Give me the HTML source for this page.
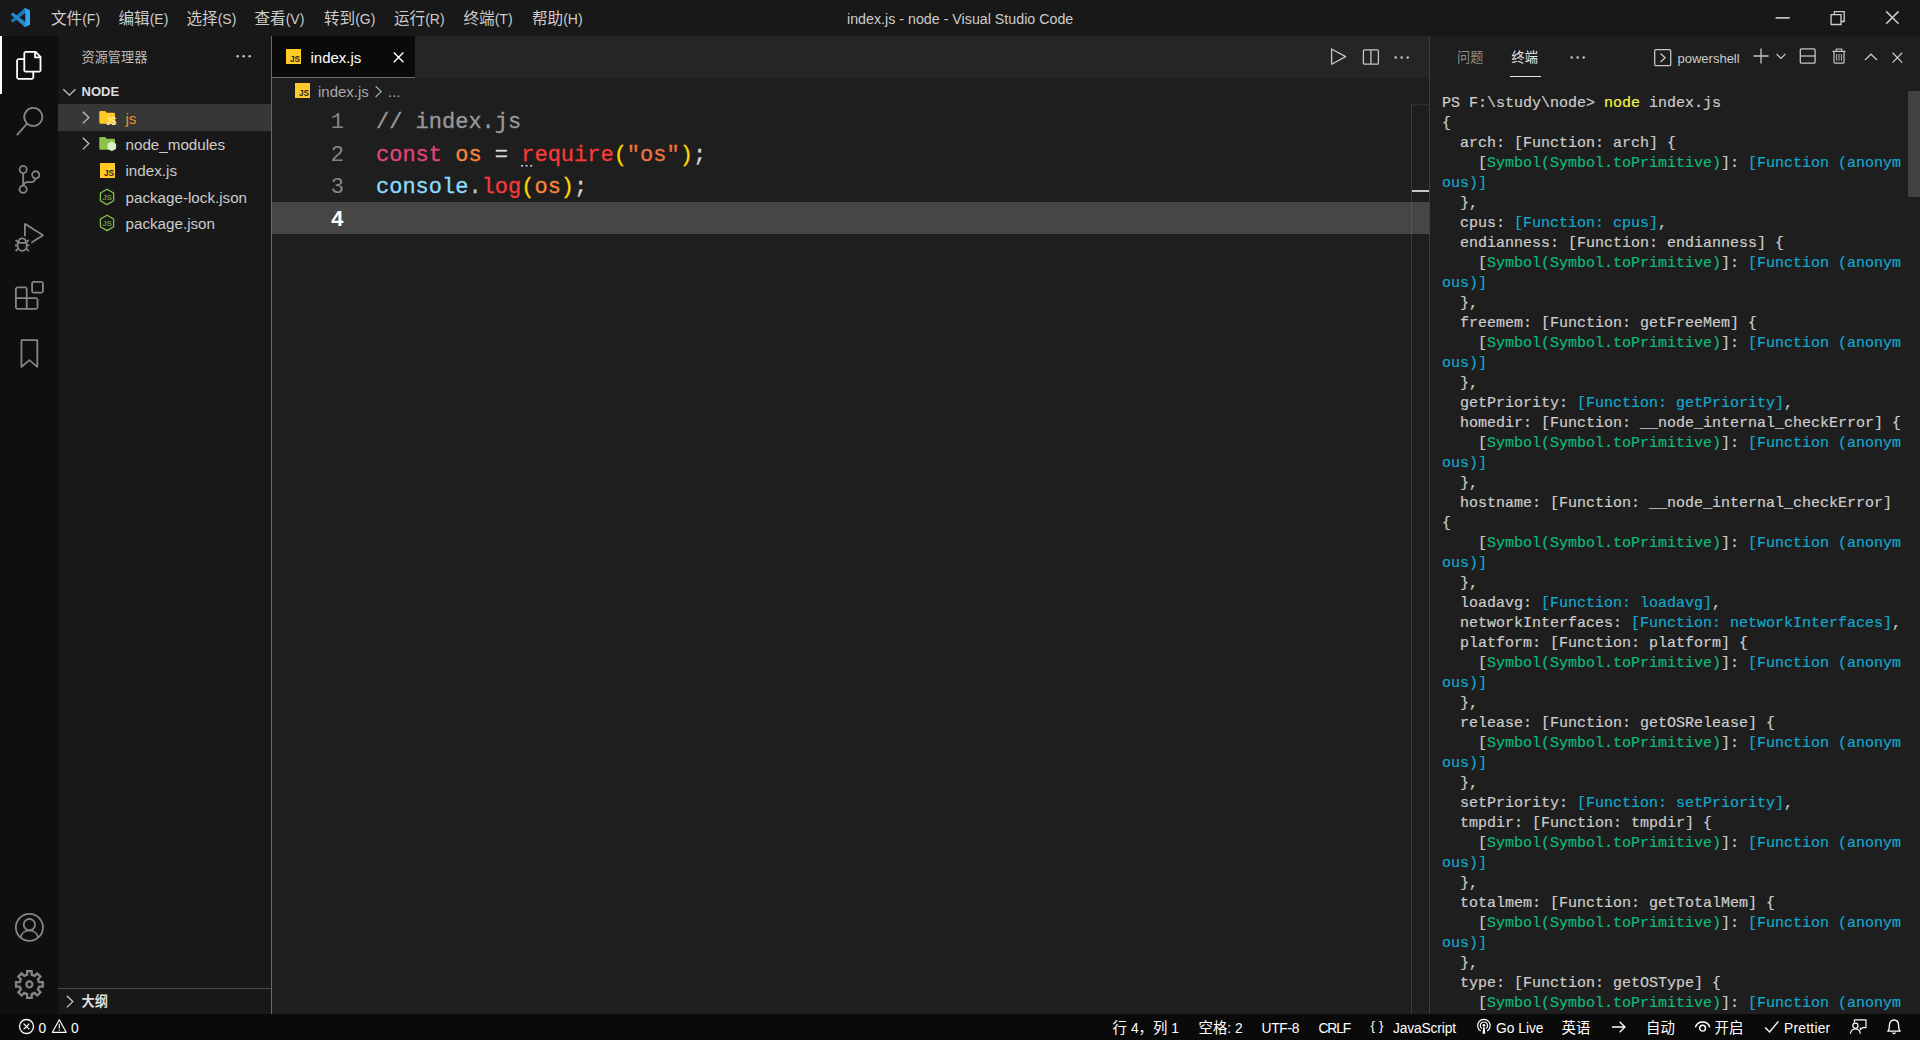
<!DOCTYPE html>
<html lang="zh-CN">
<head>
<meta charset="utf-8">
<title>index.js - node - Visual Studio Code</title>
<style>
*{box-sizing:border-box;margin:0;padding:0}
html,body{width:1920px;height:1040px;overflow:hidden;background:#1e1e1e}
body{position:relative;font-family:"Liberation Sans","Noto Sans CJK SC",sans-serif;font-size:15.6px;color:#ccc;-webkit-font-smoothing:antialiased}
.abs{position:absolute}
svg{display:block;position:absolute;overflow:visible}
.t{position:absolute;white-space:pre;line-height:1}
/* regions */
#titlebar{left:0;top:0;width:1920px;height:36px;background:#181818}
#activity{left:0;top:36px;width:58px;height:978px;background:#0f0f0f}
#sidebar{left:58px;top:36px;width:213px;height:978px;background:#181818}
#sideborder{left:271px;top:36px;width:1px;height:978px;background:#696969}
#tabs{left:272px;top:36px;width:1157px;height:42px;background:#252526}
#tab{left:272px;top:36px;width:143px;height:42px;background:#0a0a0a}
#editor{left:272px;top:78px;width:1157px;height:936px;background:#1e1e1e}
#panelborder{left:1429px;top:36px;width:1px;height:978px;background:#3e3e3e}
#panel{left:1430px;top:36px;width:490px;height:978px;background:#1e1e1e}
#status{left:0;top:1014px;width:1920px;height:26px;background:#0a0a0a}
.menu{top:11px;font-size:15.6px;color:#ccc}
.menu .lat{font-size:14px}

.row{position:absolute;left:58px;width:213px;height:26.4px}
.rt{position:absolute;left:125.5px;font-size:15.2px;color:#ccc;white-space:pre;line-height:1}

.code{-webkit-text-stroke:0.3px;position:absolute;left:376px;font-family:"Liberation Mono",monospace;font-size:22px;white-space:pre;line-height:32.4px;height:32.4px;color:#d4d4d4}
.ln{position:absolute;left:272px;width:72px;text-align:right;font-family:"Liberation Mono",monospace;font-size:22px;line-height:32.4px;height:32.4px;color:#858585}

.term{-webkit-text-stroke:0.2px;position:absolute;left:1442px;font-family:"Liberation Mono",monospace;font-size:15px;line-height:20px;height:20px;white-space:pre;color:#ccc}
.g{color:#0dbc79}.c{color:#11a8cd}.y{color:#f5f543}

.st{position:absolute;top:1021px;font-size:14.4px;line-height:1;color:#fff;white-space:pre}
.st .l{font-size:13.8px}
</style>
</head>
<body>
<div id="titlebar" class="abs"></div>
<div id="activity" class="abs"></div>
<div id="sidebar" class="abs"></div>
<div id="sideborder" class="abs"></div>
<div id="tabs" class="abs"></div>
<div id="tab" class="abs"></div>
<div id="editor" class="abs"></div>
<div id="panelborder" class="abs"></div>
<div id="panel" class="abs"></div>
<div id="status" class="abs"></div>

<!-- TITLEBAR -->
<svg style="left:11px;top:8px" width="19" height="19" viewBox="0 0 100 100">
<path fill="#1878b8" d="M96.4614 10.7962L75.8569 0.875542C73.4719 -0.272773 70.6217 0.211611 68.75 2.08333L1.29858 63.5832C-0.515693 65.2373 -0.513607 68.0937 1.30308 69.7452L6.81272 74.754C8.29793 76.1042 10.5347 76.2036 12.1338 74.9905L93.3609 13.3699C96.086 11.3026 100 13.2462 100 16.6667V16.4275C100 14.0265 98.6246 11.8378 96.4614 10.7962Z"/>
<path fill="#2088cf" d="M96.4614 89.2038L75.8569 99.1245C73.4719 100.273 70.6217 99.7884 68.75 97.9167L1.29858 36.4169C-0.515693 34.7627 -0.513607 31.9063 1.30308 30.2548L6.81272 25.246C8.29793 23.8958 10.5347 23.7964 12.1338 25.0095L93.3609 86.6301C96.086 88.6974 100 86.7538 100 83.3334V83.5726C100 85.9735 98.6246 88.1622 96.4614 89.2038Z"/>
<path fill="#33a3ee" d="M75.8578 99.1263C73.4721 100.274 70.6219 99.7885 68.75 97.9166C71.0564 100.223 75 98.5895 75 95.3278V4.67213C75 1.41039 71.0564 -0.223106 68.75 2.08329C70.6219 0.211402 73.4721 -0.273666 75.8578 0.873633L96.4587 10.7807C98.6234 11.8217 100 14.0112 100 16.4132V83.5871C100 85.9891 98.6234 88.1786 96.4586 89.2196L75.8578 99.1263Z"/>
</svg>
<div class="t menu" style="left:51px">文件<span class="lat">(F)</span></div>
<div class="t menu" style="left:118.5px">编辑<span class="lat">(E)</span></div>
<div class="t menu" style="left:186.5px">选择<span class="lat">(S)</span></div>
<div class="t menu" style="left:254.5px">查看<span class="lat">(V)</span></div>
<div class="t menu" style="left:324px">转到<span class="lat">(G)</span></div>
<div class="t menu" style="left:394px">运行<span class="lat">(R)</span></div>
<div class="t menu" style="left:463.5px">终端<span class="lat">(T)</span></div>
<div class="t menu" style="left:532px">帮助<span class="lat">(H)</span></div>
<div class="t" id="wintitle" style="left:847px;top:12px;font-size:14.25px;color:#ccc">index.js - node - Visual Studio Code</div>
<svg style="left:1770px;top:8px" width="140" height="22" viewBox="0 0 140 22" fill="none" stroke="#ccc" stroke-width="1.3">
<path stroke-width="1.6" d="M5.6 9.9H19.7"/>
<path d="M61.1 6.6H71V16.5H61.1z"/><path d="M64.3 6.6V3.6H74.2V13.5H71"/>
<path stroke-width="1.5" d="M116.2 3.4L128.6 15.8M128.6 3.4L116.2 15.8"/>
</svg>
<!-- ACTIVITY -->
<div class="abs" style="left:0;top:36px;width:2px;height:58px;background:#fff"></div>
<svg style="left:14.9px;top:50.5px" width="28.8" height="28.8" viewBox="0 0 24 24" fill="#fff"><path d="M17.5 0h-9L7 1.5V6H2.5L1 7.5v15.07L2.5 24h12.07L16 22.57V18h4.7l1.3-1.43V4.5L17.5 0zm0 2.12l2.38 2.38H17.5V2.12zm-3 20.38h-12v-15H7v9.07L8.5 18h6v4.5zm6-6h-12v-15H16V6h4.5v10.5z"/></svg>
<svg style="left:14.9px;top:106.5px" width="28.8" height="28.8" viewBox="0 0 24 24" fill="#858585"><path d="M15.25 0a8.25 8.25 0 0 0-6.18 13.72L1 22.88l1.12 1 8.05-9.12A8.251 8.251 0 1 0 15.25.01V0zm0 15a6.75 6.75 0 1 1 0-13.5 6.75 6.75 0 0 1 0 13.5z"/></svg>
<svg style="left:14.9px;top:164.5px" width="28.8" height="28.8" viewBox="0 0 24 24" fill="#858585"><path d="M21.007 8.222A3.738 3.738 0 0 0 15.045 5.2a3.737 3.737 0 0 0 1.156 6.583 2.988 2.988 0 0 1-2.668 1.67h-2.99a4.456 4.456 0 0 0-2.989 1.165V7.4a3.737 3.737 0 1 0-1.494 0v9.117a3.776 3.776 0 1 0 1.816.099 2.99 2.99 0 0 1 2.668-1.667h2.99a4.484 4.484 0 0 0 4.223-3.039 3.736 3.736 0 0 0 3.25-3.687zM4.565 3.738a2.242 2.242 0 1 1 4.484 0 2.242 2.242 0 0 1-4.484 0zm4.484 16.441a2.242 2.242 0 1 1-4.484 0 2.242 2.242 0 0 1 4.484 0zm8.221-9.715a2.242 2.242 0 1 1 0-4.485 2.242 2.242 0 0 1 0 4.485z"/></svg>
<svg style="left:14.9px;top:222.5px" width="28.8" height="28.8" viewBox="0 0 24 24" fill="#858585"><path d="M10.94 13.5l-1.32 1.32a3.73 3.73 0 0 0-7.24 0L1.06 13.5 0 14.56l1.72 1.72-.22.22V18H0v1.5h1.5v.08c.077.489.214.966.41 1.42L0 22.94 1.06 24l1.65-1.65A4.308 4.308 0 0 0 6 24a4.31 4.31 0 0 0 3.29-1.65L10.94 24 12 22.94 10.09 21c.198-.464.336-.951.41-1.45v-.1H12V18h-1.5v-1.5l-.22-.22L12 14.56l-1.06-1.06zM6 13.5a2.25 2.25 0 0 1 2.25 2.25h-4.5A2.25 2.25 0 0 1 6 13.5zm3 6a3.33 3.33 0 0 1-3 3 3.33 3.33 0 0 1-3-3v-2.25h6v2.25zm14.76-9.9v1.26L13.5 17.37V15.6l8.5-5.37L9 2v9.46a5.07 5.07 0 0 0-1.5-.72V.63L8.64 0l15.12 9.6z"/></svg>
<svg style="left:14.9px;top:280.5px" width="28.8" height="28.8" viewBox="0 0 24 24" fill="#858585"><path d="M13.5 1.5L15 0h7.5L24 1.5V9l-1.5 1.5H15L13.5 9V1.5zm1.5 0V9h7.5V1.5H15zM0 15V6l1.5-1.5H9L10.5 6v7.5H18l1.5 1.5v7.5L18 24H1.5L0 22.5V15zm9-1.5V6H1.5v7.5H9zM9 15H1.5v7.5H9V15zm1.5 7.5H18V15h-7.5v7.5z"/></svg>
<svg style="left:14.9px;top:338.5px" width="28.8" height="28.8" viewBox="0 0 24 24" fill="none" stroke="#858585" stroke-width="1.5" stroke-linejoin="round"><path d="M5.4 1h13.2v22.2l-6.6-5.6-6.6 5.6z"/></svg>
<svg style="left:14.9px;top:912.7px" width="28.8" height="28.8" viewBox="0 0 24 24" fill="none" stroke="#858585" stroke-width="1.5"><circle cx="12" cy="12" r="11.3"/><circle cx="12" cy="9.7" r="4.7"/><path d="M4.6 20.4a7.6 7.6 0 0 1 14.8 0"/></svg>
<svg style="left:14.9px;top:970.1px" width="28.8" height="28.8" viewBox="0 0 24 24" fill="none" stroke="#858585" stroke-width="1.9" stroke-linejoin="miter"><path d="M10.06 3.93L10.12 0.86L13.88 0.86L13.94 3.93L16.34 4.92L18.55 2.79L21.21 5.45L19.08 7.66L20.07 10.06L23.14 10.12L23.14 13.88L20.07 13.94L19.08 16.34L21.21 18.55L18.55 21.21L16.34 19.08L13.94 20.07L13.88 23.14L10.12 23.14L10.06 20.07L7.66 19.08L5.45 21.21L2.79 18.55L4.92 16.34L3.93 13.94L0.86 13.88L0.86 10.12L3.93 10.06L4.92 7.66L2.79 5.45L5.45 2.79L7.66 4.92Z"/><circle cx="12" cy="12" r="2.5"/></svg>
<!-- SIDEBAR -->
<div class="t" style="left:81.5px;top:50.5px;font-size:13.2px;color:#bbb">资源管理器</div>
<svg style="left:235px;top:53.8px" width="18" height="5" viewBox="0 0 18 5" fill="#c5c5c5"><circle cx="2.7" cy="2.3" r="1.25"/><circle cx="8.7" cy="2.3" r="1.25"/><circle cx="14.7" cy="2.3" r="1.25"/></svg>
<svg style="left:62px;top:86px" width="14" height="12" viewBox="0 0 14 12" fill="none" stroke="#c5c5c5" stroke-width="1.3"><path d="M1.3 3.3L7.4 9.2L13.5 3.3"/></svg>
<div class="t" style="left:81.5px;top:84.6px;font-size:13px;font-weight:bold;color:#ddd">NODE</div>
<div class="row" style="top:104.4px;background:#373737"></div>
<svg style="left:81px;top:110px" width="10" height="15" viewBox="0 0 10 15" fill="none" stroke="#c5c5c5" stroke-width="1.3"><path d="M1.8 1.8L7.8 7.6L1.8 13.4"/></svg>
<svg style="left:81px;top:136.4px" width="10" height="15" viewBox="0 0 10 15" fill="none" stroke="#c5c5c5" stroke-width="1.3"><path d="M1.8 1.8L7.8 7.6L1.8 13.4"/></svg>
<!-- folder js -->
<svg style="left:99px;top:110px" width="19" height="16" viewBox="0 0 19 16"><path fill="#ffca28" d="M0.3 2.2a1.2 1.2 0 0 1 1.2-1.2h4.6l1.7 1.7h7a1.2 1.2 0 0 1 1.2 1.2v8.6a1.2 1.2 0 0 1-1.2 1.2H1.5a1.2 1.2 0 0 1-1.2-1.2z"/><text x="7.2" y="11.3" transform="scale(1,1.3)" font-family="Liberation Sans,sans-serif" font-weight="bold" font-size="8.4" fill="#ffecb3">JS</text></svg>
<div class="rt" style="top:110.5px;color:#f0902a">js</div>
<!-- folder node_modules -->
<svg style="left:99px;top:136.4px" width="19" height="16" viewBox="0 0 19 16"><path fill="#8bc34a" d="M0.3 2.2a1.2 1.2 0 0 1 1.2-1.2h4.6l1.7 1.7h7a1.2 1.2 0 0 1 1.2 1.2v8.6a1.2 1.2 0 0 1-1.2 1.2H1.5a1.2 1.2 0 0 1-1.2-1.2z"/><path fill="#dcedc8" d="M12.8 5.3l4.3 2.5v5l-4.3 2.5l-4.3-2.5v-5z"/></svg>
<div class="rt" style="top:136.9px">node_modules</div>
<!-- index.js -->
<svg style="left:100px;top:163px" width="15" height="15" viewBox="0 0 15 15"><rect width="15" height="15" fill="#ffca28"/><text x="3.9" y="13.4" font-family="Liberation Sans,sans-serif" font-weight="bold" font-size="8.2" fill="#1f1f1f">JS</text></svg>
<div class="rt" style="top:163.3px">index.js</div>
<!-- package-lock.json -->
<svg class="nodeic" style="left:99.2px;top:187.6px" width="16" height="18" viewBox="0 0 16 18"><path fill="none" stroke="#8bc34a" stroke-width="1.3" stroke-linejoin="round" d="M8 1.2l6.6 3.8v7.8L8 16.6 1.4 12.8V5z"/><text x="3.4" y="11.8" font-family="Liberation Sans,sans-serif" font-size="8" fill="#8bc34a">JS</text></svg>
<div class="rt" style="top:189.7px">package-lock.json</div>
<svg class="nodeic" style="left:99.2px;top:214px" width="16" height="18" viewBox="0 0 16 18"><path fill="none" stroke="#8bc34a" stroke-width="1.3" stroke-linejoin="round" d="M8 1.2l6.6 3.8v7.8L8 16.6 1.4 12.8V5z"/><text x="3.4" y="11.8" font-family="Liberation Sans,sans-serif" font-size="8" fill="#8bc34a">JS</text></svg>
<div class="rt" style="top:216.1px">package.json</div>
<!-- outline -->
<div class="abs" style="left:58px;top:988px;width:213px;height:1px;background:#464646"></div>
<svg style="left:64px;top:994px" width="10" height="15" viewBox="0 0 10 15" fill="none" stroke="#c5c5c5" stroke-width="1.3"><path d="M2.8 1.8L8.8 7.6L2.8 13.4"/></svg>
<div class="t" style="left:81.5px;top:995px;font-size:13.2px;font-weight:bold;color:#ddd">大纲</div>
<!-- EDITOR -->
<div class="abs" style="left:272px;top:77px;width:143px;height:1px;background:#6e6e6e"></div>
<svg style="left:286px;top:49px" width="15" height="15" viewBox="0 0 15 15"><rect width="15" height="15" fill="#ffca28"/><text x="3.9" y="13.4" font-family="Liberation Sans,sans-serif" font-weight="bold" font-size="8.2" fill="#1f1f1f">JS</text></svg>
<div class="t" style="left:310.5px;top:49.5px;font-size:15px;color:#fff">index.js</div>
<svg style="left:392px;top:51px" width="13" height="13" viewBox="0 0 13 13" fill="none" stroke="#fff" stroke-width="1.4"><path d="M1.8 1.6L11.4 11.2M11.4 1.6L1.8 11.2"/></svg>
<!-- editor actions -->
<svg style="left:1329px;top:47px" width="20" height="20" viewBox="0 0 20 20" fill="none" stroke="#c5c5c5" stroke-width="1.3" stroke-linejoin="round"><path d="M2.6 2L16.6 9.6L2.6 17.3z"/></svg>
<svg style="left:1361px;top:47px" width="20" height="20" viewBox="0 0 20 20" fill="none" stroke="#c5c5c5" stroke-width="1.3"><rect x="2.4" y="2.9" width="15" height="14.3" rx="1.2"/><path d="M9.9 2.9V17.2"/></svg>
<svg style="left:1393px;top:55px" width="18" height="5" viewBox="0 0 18 5" fill="#c5c5c5"><circle cx="2.7" cy="2.4" r="1.25"/><circle cx="8.7" cy="2.4" r="1.25"/><circle cx="14.7" cy="2.4" r="1.25"/></svg>
<!-- breadcrumbs -->
<svg style="left:294.5px;top:83px" width="15" height="15" viewBox="0 0 15 15"><rect width="15" height="15" fill="#ffca28"/><text x="3.9" y="13.4" font-family="Liberation Sans,sans-serif" font-weight="bold" font-size="8.2" fill="#1f1f1f">JS</text></svg>
<div class="t" style="left:318px;top:83.5px;font-size:15px;color:#a9a9a9">index.js</div>
<svg style="left:373px;top:84px" width="10" height="15" viewBox="0 0 10 15" fill="none" stroke="#a9a9a9" stroke-width="1.2"><path d="M2.6 2.2L8.2 7.6L2.6 13"/></svg>
<div class="t" style="left:388px;top:83.5px;font-size:15px;color:#a9a9a9">...</div>
<!-- lines -->
<div class="abs" style="left:272px;top:202px;width:1157px;height:32px;background:#464646"></div>
<div class="ln" style="top:107.4px">1</div>
<div class="ln" style="top:139.8px">2</div>
<div class="ln" style="top:172.2px">3</div>
<div class="ln" style="top:204.6px;color:#fff;font-weight:bold">4</div>
<div class="code" style="top:107.4px"><span style="color:#9a9a9a">// index.js</span></div>
<div class="code" style="top:139.8px"><span style="color:#e0457b">const</span> <span style="color:#f9863a">os</span> = <span style="color:#f83a3a">require</span><span style="color:#ffd700">(</span><span style="color:#f0743f">"os"</span><span style="color:#ffd700">)</span>;</div>
<div class="code" style="top:172.2px"><span style="color:#8cdcfe">console</span><span style="color:#b8c4d0">.</span><span style="color:#f83a3a">log</span><span style="color:#ffd700">(</span><span style="color:#f9863a">os</span><span style="color:#ffd700">)</span>;</div>
<svg style="left:520px;top:164.4px" width="14" height="4" viewBox="0 0 14 4" fill="#d0d0d0"><rect x="1" y="1" width="2" height="1.6"/><rect x="5.6" y="1" width="2" height="1.6"/><rect x="10.2" y="1" width="2" height="1.6"/></svg>
<!-- overview ruler -->
<div class="abs" style="left:1411px;top:104px;width:18px;height:910px;border-left:1px solid rgba(128,128,128,0.3);border-top:1px solid #2e2e2e"></div>
<div class="abs" style="left:1412px;top:190px;width:17px;height:2px;background:#c8c8c8"></div>
<!-- PANEL -->
<div class="t" style="left:1457px;top:50.5px;font-size:13.2px;color:#8f8f8f">问题</div>
<div class="t" style="left:1511.5px;top:50.5px;font-size:13.2px;color:#e7e7e7">终端</div>
<div class="abs" style="left:1510px;top:76px;width:31px;height:1px;background:#e7e7e7"></div>
<svg style="left:1568.5px;top:55px" width="18" height="5" viewBox="0 0 18 5" fill="#c5c5c5"><circle cx="2.7" cy="2.4" r="1.25"/><circle cx="8.7" cy="2.4" r="1.25"/><circle cx="14.7" cy="2.4" r="1.25"/></svg>
<svg style="left:1653px;top:48px" width="20" height="20" viewBox="0 0 20 20" fill="none" stroke="#c5c5c5" stroke-width="1.3"><rect x="1.7" y="1.7" width="16" height="16" rx="1.2"/><path d="M7.5 5.6L12.1 9.8L7.5 14"/></svg>
<div class="t" style="left:1677.5px;top:51.5px;font-size:13px;color:#ccc">powershell</div>
<svg style="left:1752px;top:47px" width="18" height="18" viewBox="0 0 18 18" fill="none" stroke="#c5c5c5" stroke-width="1.3"><path d="M9 1.4V16.6M1.4 9H16.6"/></svg>
<svg style="left:1775px;top:52px" width="12" height="9" viewBox="0 0 12 9" fill="none" stroke="#c5c5c5" stroke-width="1.2"><path d="M1.6 2L6 6.4L10.4 2"/></svg>
<svg style="left:1798px;top:47px" width="20" height="18" viewBox="0 0 20 18" fill="none" stroke="#c5c5c5" stroke-width="1.3"><rect x="2.3" y="1.9" width="14.8" height="14.3" rx="1.2"/><path d="M2.3 9H17.1"/></svg>
<svg style="left:1831px;top:47px" width="16" height="18" viewBox="0 0 16 18" fill="none" stroke="#c5c5c5" stroke-width="1.2"><path d="M1.5 4.4H14.5M5.3 4.2V2H10.7V4.2M3 4.6V15.2a1 1 0 0 0 1 1H12a1 1 0 0 0 1-1V4.6"/><path stroke-width="0.9" d="M5.6 7V13.8M8 7V13.8M10.4 7V13.8"/></svg>
<svg style="left:1863px;top:52px" width="16" height="10" viewBox="0 0 16 10" fill="none" stroke="#c5c5c5" stroke-width="1.3"><path d="M2 8L8 2.2L14 8"/></svg>
<svg style="left:1891px;top:51px" width="13" height="13" viewBox="0 0 13 13" fill="none" stroke="#c5c5c5" stroke-width="1.3"><path d="M1.6 1.8L11.2 11.6M11.2 1.8L1.6 11.6"/></svg>
<div class="abs" style="left:1908px;top:91px;width:12px;height:106px;background:#424242"></div>
<div class="term" style="top:93.5px">PS F:\study\node&gt; <span class="y">node</span> index.js</div>
<div class="term" style="top:113.5px">{</div>
<div class="term" style="top:133.5px">  arch: [Function: arch] {</div>
<div class="term" style="top:153.5px">    [<span class="g">Symbol(Symbol.toPrimitive)</span>]: <span class="c">[Function (anonym</span></div>
<div class="term" style="top:173.5px"><span class="c">ous)]</span></div>
<div class="term" style="top:193.5px">  },</div>
<div class="term" style="top:213.5px">  cpus: <span class="c">[Function: cpus]</span>,</div>
<div class="term" style="top:233.5px">  endianness: [Function: endianness] {</div>
<div class="term" style="top:253.5px">    [<span class="g">Symbol(Symbol.toPrimitive)</span>]: <span class="c">[Function (anonym</span></div>
<div class="term" style="top:273.5px"><span class="c">ous)]</span></div>
<div class="term" style="top:293.5px">  },</div>
<div class="term" style="top:313.5px">  freemem: [Function: getFreeMem] {</div>
<div class="term" style="top:333.5px">    [<span class="g">Symbol(Symbol.toPrimitive)</span>]: <span class="c">[Function (anonym</span></div>
<div class="term" style="top:353.5px"><span class="c">ous)]</span></div>
<div class="term" style="top:373.5px">  },</div>
<div class="term" style="top:393.5px">  getPriority: <span class="c">[Function: getPriority]</span>,</div>
<div class="term" style="top:413.5px">  homedir: [Function: __node_internal_checkError] {</div>
<div class="term" style="top:433.5px">    [<span class="g">Symbol(Symbol.toPrimitive)</span>]: <span class="c">[Function (anonym</span></div>
<div class="term" style="top:453.5px"><span class="c">ous)]</span></div>
<div class="term" style="top:473.5px">  },</div>
<div class="term" style="top:493.5px">  hostname: [Function: __node_internal_checkError]</div>
<div class="term" style="top:513.5px">{</div>
<div class="term" style="top:533.5px">    [<span class="g">Symbol(Symbol.toPrimitive)</span>]: <span class="c">[Function (anonym</span></div>
<div class="term" style="top:553.5px"><span class="c">ous)]</span></div>
<div class="term" style="top:573.5px">  },</div>
<div class="term" style="top:593.5px">  loadavg: <span class="c">[Function: loadavg]</span>,</div>
<div class="term" style="top:613.5px">  networkInterfaces: <span class="c">[Function: networkInterfaces]</span>,</div>
<div class="term" style="top:633.5px">  platform: [Function: platform] {</div>
<div class="term" style="top:653.5px">    [<span class="g">Symbol(Symbol.toPrimitive)</span>]: <span class="c">[Function (anonym</span></div>
<div class="term" style="top:673.5px"><span class="c">ous)]</span></div>
<div class="term" style="top:693.5px">  },</div>
<div class="term" style="top:713.5px">  release: [Function: getOSRelease] {</div>
<div class="term" style="top:733.5px">    [<span class="g">Symbol(Symbol.toPrimitive)</span>]: <span class="c">[Function (anonym</span></div>
<div class="term" style="top:753.5px"><span class="c">ous)]</span></div>
<div class="term" style="top:773.5px">  },</div>
<div class="term" style="top:793.5px">  setPriority: <span class="c">[Function: setPriority]</span>,</div>
<div class="term" style="top:813.5px">  tmpdir: [Function: tmpdir] {</div>
<div class="term" style="top:833.5px">    [<span class="g">Symbol(Symbol.toPrimitive)</span>]: <span class="c">[Function (anonym</span></div>
<div class="term" style="top:853.5px"><span class="c">ous)]</span></div>
<div class="term" style="top:873.5px">  },</div>
<div class="term" style="top:893.5px">  totalmem: [Function: getTotalMem] {</div>
<div class="term" style="top:913.5px">    [<span class="g">Symbol(Symbol.toPrimitive)</span>]: <span class="c">[Function (anonym</span></div>
<div class="term" style="top:933.5px"><span class="c">ous)]</span></div>
<div class="term" style="top:953.5px">  },</div>
<div class="term" style="top:973.5px">  type: [Function: getOSType] {</div>
<div class="term" style="top:993.5px">    [<span class="g">Symbol(Symbol.toPrimitive)</span>]: <span class="c">[Function (anonym</span></div>
<!-- STATUS -->
<svg style="left:18px;top:1018px" width="17" height="17" viewBox="0 0 17 17" fill="none" stroke="#fff" stroke-width="1.3"><circle cx="8.5" cy="8.5" r="7"/><path d="M5.6 5.6L11.4 11.4M11.4 5.6L5.6 11.4"/></svg>
<div class="st" id="e0" style="left:38.5px"><span class="l">0</span></div>
<svg style="left:51px;top:1018px" width="17" height="17" viewBox="0 0 17 17" fill="none" stroke="#fff" stroke-width="1.3" stroke-linejoin="round"><path stroke-width="1.15" d="M8.3 1.7L15.2 14.3H1.4z"/><path stroke-width="1.1" d="M8.3 5.8V10.4M8.3 11.4V12.8"/></svg>
<div class="st" id="w0" style="left:71px"><span class="l">0</span></div>
<div class="st" style="left:1112.5px">行 <span class="l">4</span>，列 <span class="l">1</span></div>
<div class="st" style="left:1198.5px">空格<span class="l">: 2</span></div>
<div class="st" style="left:1261.5px"><span class="l" style="letter-spacing:-0.3px">UTF-8</span></div>
<div class="st" style="left:1318.5px"><span class="l" style="letter-spacing:-1.1px">CRLF</span></div>
<div class="st" style="left:1370.5px;top:1018px"><span class="l" style="letter-spacing:4px;font-size:13.4px">{}</span></div>
<div class="st" style="left:1393px"><span class="l" style="letter-spacing:-0.15px">JavaScript</span></div>
<svg style="left:1476px;top:1018px" width="16" height="17" viewBox="0 0 16 17" fill="none" stroke="#fff" stroke-width="1.2"><circle cx="7.9" cy="7.3" r="1.4" fill="#fff" stroke="none"/><path d="M7.1 9.2h1.6l0.5 6.6h-2.6z" fill="#fff" stroke="none"/><path d="M5.84 10.55A3.6 3.6 0 1 1 9.96 10.55"/><path d="M4.75 13.06A6.3 6.3 0 1 1 11.05 13.06"/></svg>
<div class="st" style="left:1496px"><span class="l">Go Live</span></div>
<div class="st" style="left:1561.5px">英语</div>
<svg style="left:1611px;top:1020px" width="16" height="14" viewBox="0 0 16 14" fill="none" stroke="#fff" stroke-width="1.3"><path d="M1 7H14M8.6 1.8L14 7L8.6 12.2"/></svg>
<div class="st" style="left:1646px">自动</div>
<svg style="left:1694px;top:1020px" width="18" height="14" viewBox="0 0 18 14" fill="none" stroke="#fff" stroke-width="1.4"><path d="M1.4 7.4C2.4 3.8 5.2 2 8.6 2S14.8 3.8 15.8 7.4"/><circle cx="8.6" cy="8.2" r="2.9"/></svg>
<div class="st" style="left:1714.5px">开启</div>
<svg style="left:1764px;top:1020px" width="16" height="14" viewBox="0 0 16 14" fill="none" stroke="#fff" stroke-width="1.4"><path d="M1.2 7.6L5.6 12L14.4 1.4"/></svg>
<div class="st" style="left:1784px"><span class="l" style="letter-spacing:0.25px">Prettier</span></div>
<svg style="left:1849px;top:1018px" width="19" height="17" viewBox="0 0 19 17" fill="none" stroke="#fff" stroke-width="1.2" stroke-linejoin="round"><path d="M5.4 4.6V1.8H17V9.6H13.6L11.4 11.6V9.6"/><circle cx="6.4" cy="7.8" r="2.6"/><path d="M1.4 15.8C1.8 12.6 3.8 11 6.4 11S11 12.6 11.4 15.8"/></svg>
<svg style="left:1886px;top:1018px" width="16" height="17" viewBox="0 0 16 17" fill="none" stroke="#fff" stroke-width="1.3" stroke-linejoin="round"><path d="M1.8 13.2C3.2 12 3.4 10.6 3.4 7.6C3.4 4.2 5.2 2 8 2S12.6 4.2 12.6 7.6C12.6 10.6 12.8 12 14.2 13.2z"/><path d="M6.6 14.6a1.5 1.5 0 0 0 2.8 0"/></svg>
</body>
</html>
